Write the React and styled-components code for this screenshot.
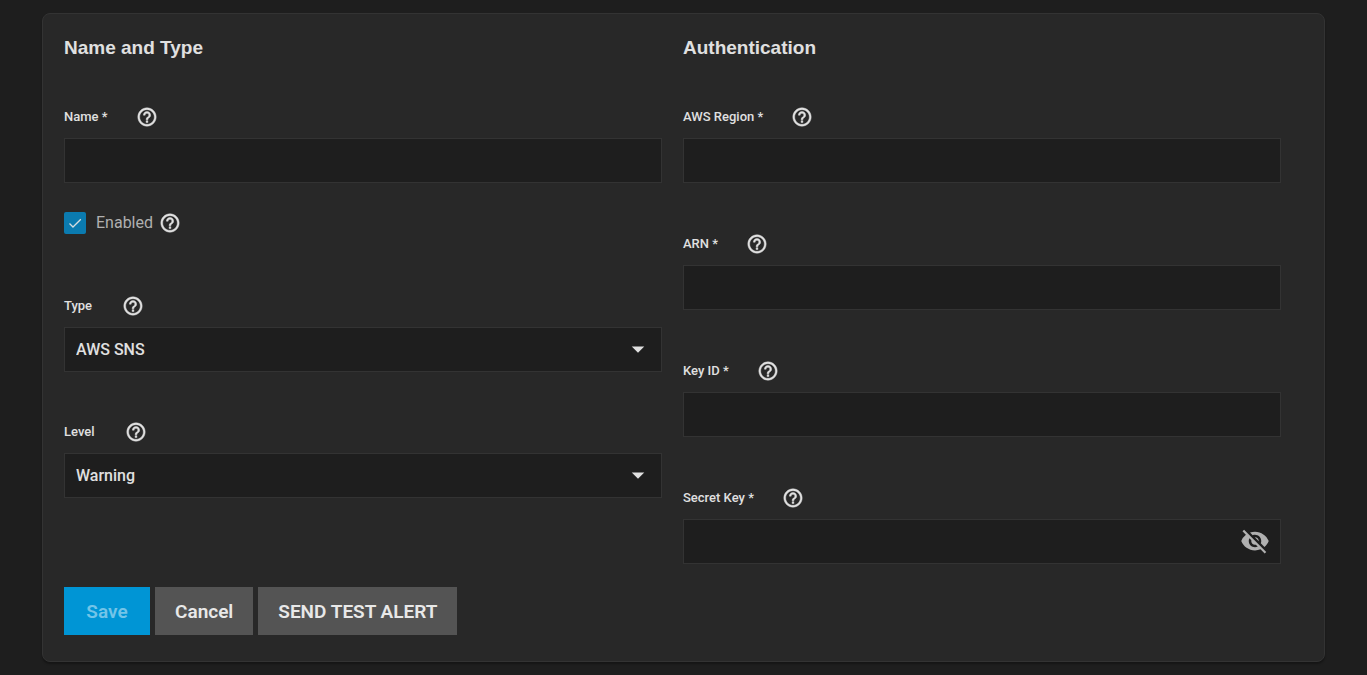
import React, { useId, useState } from "react";
import styled, { createGlobalStyle } from "styled-components";
import { MdArrowDropDown, MdHelpOutline, MdVisibility, MdVisibilityOff } from "react-icons/md";

const GlobalStyle = createGlobalStyle`
  *, *::before, *::after { box-sizing: border-box; }
  body {
    margin: 0;
    background: #1e1e1e;
    color: #e0e0e0;
    font-family: Roboto, "Liberation Sans", sans-serif;
  }
`;

const Page = styled.main`
  padding: 13px 42px;
`;

const Card = styled.form`
  padding: 20px 43px 26px 21px;
  background: #282828;
  border: 1px solid #333333;
  border-radius: 8px;
  box-shadow: 0 2px 2px rgba(0, 0, 0, 0.3);
`;

const Columns = styled.div`
  display: grid;
  grid-template-columns: 1fr 1fr;
  column-gap: 21px;
`;

const Column = styled.section`
  min-width: 0;
`;

const Title = styled.h2`
  margin: 0 0 42px;
  font-family: "Liberation Sans", sans-serif;
  font-size: 19px;
  font-weight: 700;
  line-height: 28px;
`;

const Fields = styled.div`
  display: flex;
  flex-direction: column;
  gap: ${(p) => p.$gap}px;
`;

const FieldBox = styled.div`
  display: flex;
  flex-direction: column;
  gap: 9px;
`;

const LabelRow = styled.div`
  display: flex;
  align-items: center;
  gap: ${(p) => (p.$required ? 28 : 30)}px;
  height: 25px;
`;

const Label = styled.label`
  font-size: 13px;
  font-weight: 500;
  line-height: 16px;
`;

const IconButton = styled.button`
  display: flex;
  padding: 0;
  border: 0;
  background: none;
  color: ${(p) => (p.$muted ? "#b0b0b0" : "#e0e0e0")};
  cursor: pointer;
`;

const HelpIcon = styled(MdHelpOutline)`
  path:last-child {
    stroke: currentColor;
    stroke-width: 0.5px;
  }
`;

const Control = styled.div`
  display: flex;
  align-items: center;
  height: 45px;
  padding-right: ${(p) => p.$end || 0}px;
  background: #1e1e1e;
  border: 1px solid #333333;
  position: relative;
  > button { padding-bottom: 2px; }
`;

const TextInput = styled.input`
  flex: 1;
  min-width: 0;
  height: 100%;
  padding: 0 11px;
  border: 0;
  outline: 0;
  background: none;
  color: inherit;
  font: 500 16px/20px Roboto, sans-serif;
`;

const Select = styled.select`
  flex: 1;
  height: 100%;
  padding: 0 40px 0 11px;
  border: 0;
  outline: 0;
  appearance: none;
  background: #1e1e1e;
  color: inherit;
  font: 500 16px/20px Roboto, sans-serif;
`;

const SelectArrow = styled(MdArrowDropDown)`
  position: absolute;
  top: 6px;
  right: 8px;
  pointer-events: none;
`;

const CheckRow = styled.div`
  display: flex;
  align-items: center;
  gap: 6px;
  height: 22px;
  margin: 29px 0 59px;
`;

const CheckLabel = styled.label`
  display: flex;
  align-items: center;
  gap: 10px;
  color: #b0b0b0;
  font-size: 16px;
  line-height: 22px;
`;

const CheckBoxFrame = styled.span`
  display: grid;
  width: 22px;
  height: 22px;
  > * { grid-area: 1 / 1; }
  svg { pointer-events: none; }
  input:not(:checked) + svg { visibility: hidden; }
`;

const CheckInput = styled.input`
  width: 22px;
  height: 22px;
  margin: 0;
  appearance: none;
  border-radius: 2px;
  background: #444444;
  &:checked { background: #0b7bb0; }
`;

const Actions = styled.div`
  display: flex;
  gap: 5px;
  margin-top: 23px;
`;

const Button = styled.button`
  min-width: 86px;
  height: 48px;
  padding: 2px 20px 0;
  border: 0;
  background: ${(p) => (p.$primary ? "#0095d5" : "#545454")};
  color: ${(p) => (p.$primary ? "#73c4e8" : "#e8e8e8")};
  font: 600 19px/24px Roboto, sans-serif;
  cursor: pointer;
`;

function Help({ topic }) {
  return (
    <IconButton type="button" aria-label={`Help: ${topic}`}>
      <HelpIcon size={22} />
    </IconButton>
  );
}

function Field({ label, required, end, children }) {
  const id = useId();
  return (
    <FieldBox>
      <LabelRow $required={required}>
        <Label htmlFor={id}>{required ? `${label} *` : label}</Label>
        <Help topic={label} />
      </LabelRow>
      <Control $end={end}>{children(id)}</Control>
    </FieldBox>
  );
}

function TextField({ label }) {
  return (
    <Field label={label} required>
      {(id) => <TextInput id={id} type="text" />}
    </Field>
  );
}

function SelectField({ label, options }) {
  return (
    <Field label={label}>
      {(id) => (
        <>
          <Select id={id}>
            {options.map((option) => <option key={option}>{option}</option>)}
          </Select>
          <SelectArrow size={30} />
        </>
      )}
    </Field>
  );
}

function SecretField({ label }) {
  const [shown, setShown] = useState(false);
  const Icon = shown ? MdVisibility : MdVisibilityOff;
  return (
    <Field label={label} required end={10}>
      {(id) => (
        <>
          <TextInput id={id} type={shown ? "text" : "password"} />
          <IconButton $muted type="button" aria-label="Toggle visibility" onClick={() => setShown(!shown)}>
            <Icon size={30} />
          </IconButton>
        </>
      )}
    </Field>
  );
}

export default function App() {
  return (
    <>
      <GlobalStyle />
      <Page>
        <Card onSubmit={(e) => e.preventDefault()}>
          <Columns>
            <Column>
              <Title>Name and Type</Title>
              <TextField label="Name" />
              <CheckRow>
                <CheckLabel>
                  <CheckBoxFrame>
                    <CheckInput type="checkbox" defaultChecked />
                    <svg width="22" height="22" viewBox="0 0 22 22" fill="none" stroke="#d6dde0" strokeWidth="1.3">
                      <path d="M5.5 11.5 9 15 16.8 7.2" />
                    </svg>
                  </CheckBoxFrame>
                  Enabled
                </CheckLabel>
                <Help topic="Enabled" />
              </CheckRow>
              <Fields $gap={47}>
                <SelectField label="Type" options={["AWS SNS", "Email", "Slack"]} />
                <SelectField label="Level" options={["Warning", "Info", "Error"]} />
              </Fields>
            </Column>
            <Column>
              <Title>Authentication</Title>
              <Fields $gap={48}>
                <TextField label="AWS Region" />
                <TextField label="ARN" />
                <TextField label="Key ID" />
                <SecretField label="Secret Key" />
              </Fields>
            </Column>
          </Columns>
          <Actions>
            <Button type="submit" $primary>Save</Button>
            <Button type="button">Cancel</Button>
            <Button type="button">SEND TEST ALERT</Button>
          </Actions>
        </Card>
      </Page>
    </>
  );
}
